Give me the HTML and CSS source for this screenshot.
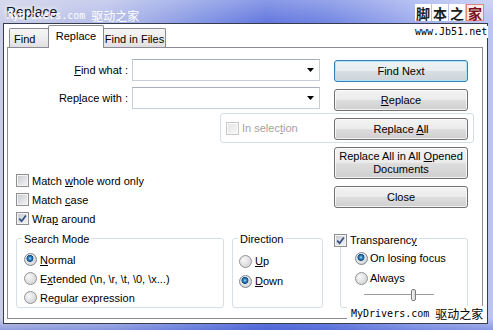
FILE: index.html
```html
<!DOCTYPE html>
<html>
<head>
<meta charset="utf-8">
<link rel="stylesheet" href="styles.css">
</head>
<body>
<div class="window">
  <div class="titlebar"><span class="title">Replace</span></div>
  <div class="client">
    <div class="tabs">
      <div class="tab tab-find">Find</div>
      <div class="tab tab-active">Replace</div>
      <div class="tab tab-files">Find in Files</div>
    </div>
    <div class="panel">
      <div class="top">
        <div class="left">
          <div class="field">
            <label><u>F</u>ind what :</label>
            <div class="combo"><svg width="7" height="4" viewBox="0 0 7 4"><path d="M0 0h7L3.5 4z" fill="#000"/></svg></div>
          </div>
          <div class="field">
            <label>Rep<u>l</u>ace with :</label>
            <div class="combo"><svg width="7" height="4" viewBox="0 0 7 4"><path d="M0 0h7L3.5 4z" fill="#000"/></svg></div>
          </div>
          <div class="selbox">
            <span class="chk chk-dis"></span><span>In selec<u>t</u>ion</span>
          </div>
          <div class="opts">
            <div class="opt"><span class="chk"></span><span>Match <u>w</u>hole word only</span></div>
            <div class="opt"><span class="chk"></span><span>Match <u>c</u>ase</span></div>
            <div class="opt"><span class="chk"><svg width="9" height="9" viewBox="0 0 9 9"><path d="M1.2 4.6L3.6 7.2L7.9 1.4" fill="none" stroke="#2f4f85" stroke-width="1.7"/></svg></span><span>Wra<u>p</u> around</span></div>
          </div>
        </div>
        <div class="buttons">
          <div class="btn btn-focus"><span>Find Next</span></div>
          <div class="btn"><span><u>R</u>eplace</span></div>
          <div class="btn"><span>Replace <u>A</u>ll</span></div>
          <div class="btn btn-tall"><span>Replace All in All <u>O</u>pened<br>Documents</span></div>
          <div class="btn"><span>Close</span></div>
        </div>
      </div>
      <div class="groups">
        <div class="group g-search">
          <div class="gtitle">Search Mode</div>
          <div class="glist">
            <div class="ropt"><span class="radio radio-on"></span><span><u>N</u>ormal</span></div>
            <div class="ropt"><span class="radio"></span><span>E<u>x</u>tended (\n, \r, \t, \0, \x...)</span></div>
            <div class="ropt"><span class="radio"></span><span>Re<u>g</u>ular expression</span></div>
          </div>
        </div>
        <div class="group g-dir">
          <div class="gtitle">Direction</div>
          <div class="glist">
            <div class="ropt"><span class="radio"></span><span><u>U</u>p</span></div>
            <div class="ropt"><span class="radio radio-on"></span><span><u>D</u>own</span></div>
          </div>
        </div>
        <div class="group g-trans">
          <div class="gtitle gtitle-chk"><span class="chk"><svg width="9" height="9" viewBox="0 0 9 9"><path d="M1.2 4.6L3.6 7.2L7.9 1.4" fill="none" stroke="#2f4f85" stroke-width="1.7"/></svg></span><span>Transparenc<u>y</u></span></div>
          <div class="glist">
            <div class="ropt"><span class="radio radio-on"></span><span>On losing focus</span></div>
            <div class="ropt"><span class="radio"></span><span>Always</span></div>
            <div class="slider"><span class="thumb"></span></div>
          </div>
        </div>
      </div>
    </div>
  </div>

  <div class="wm wm-tl"><span class="lat">MyDrivers.com </span><span class="cjk">驱动之家</span></div>
  <div class="wm wm-br"><span class="lat">MyDrivers.com </span><span class="cjk">驱动之家</span></div>
  <div class="wm-tr">
    <span class="ch">脚</span><span class="ch">本</span><span class="ch">之</span><span class="ch ch-red">家</span>
  </div>
  <div class="wm wm-url"><span class="lat">www.Jb51.net</span></div>
</div>
</body>
</html>
```
FILE: styles.css
```css
* { box-sizing: border-box; }
html, body { margin: 0; padding: 0; }
body {
  width: 493px;
  height: 330px;
  overflow: hidden;
  font-family: "Liberation Sans", Arial, sans-serif;
  font-size: 11px;
  color: #000;
  background: #fff;
}
u { text-decoration: underline; text-underline-offset: 1px; }

.window {
  position: relative;
  width: 493px;
  height: 330px;
  display: flex;
  flex-direction: column;
  padding: 0 5px 6px 3px;
  background:
    linear-gradient(180deg, rgba(255,255,255,0.25) 0, rgba(255,255,255,0) 23px, rgba(0,0,0,0) 318px, rgba(40,70,200,0.35) 330px),
    linear-gradient(90deg, #c9cde6 0%, #b6bee9 22%, #8597e4 40%, #6478df 54%, #7185e2 66%, #a0aeee 84%, #bdc5f0 100%);
}
.titlebar {
  height: 23px;
  flex: none;
  display: flex;
  align-items: center;
  padding-left: 3px;
}
.title {
  font-size: 14px;
  color: #141728;
  text-shadow: 0 0 4px #fff, 0 0 8px rgba(255,255,255,0.9);
}

.client {
  flex: 1;
  background: #fff;
  border: 1px solid #363c4c;
  padding: 1px 4px 4px 3px;
  display: flex;
  flex-direction: column;
}

.tabs {
  display: flex;
  align-items: flex-end;
  height: 22px;
  padding-left: 2px;
  flex: none;
}
.tab {
  height: 19px;
  border: 1px solid #898c95;
  border-bottom: none;
  border-radius: 2px 2px 0 0;
  background: linear-gradient(#f6f6f6, #ececec 55%, #e0e0e0);
  padding-top: 3px;
  line-height: 14px;
  text-align: center;
}
.tab-find { width: 40px; text-align: left; padding-left: 4px; }
.tab-active {
  width: 56px;
  height: 23px;
  margin-left: -1px;
  margin-bottom: -1px;
  background: #fff;
  position: relative;
  z-index: 1;
}
.tab-files { width: 63px; margin-left: -1px; }

.panel {
  flex: 1;
  border: 1px solid #898c95;
  background: #fff;
  display: flex;
  flex-direction: column;
}

.top { display: flex; }
.left { width: 326px; flex: none; }
.field {
  display: flex;
  align-items: center;
  height: 22px;
  margin-top: 6px;
}
.field:first-child { margin-top: 11px; }
.field label { width: 120px; text-align: right; }
.combo {
  margin-left: 4px;
  width: 188px;
  height: 22px;
  border: 1px solid #c8ced8;
  border-top-color: #a9afb9;
  background: #fff;
  display: flex;
  align-items: center;
  justify-content: flex-end;
  padding-right: 5px;
}
.combo svg { display: block; }

.selbox {
  margin: 4px 0 0 212px;
  width: 254px;
  height: 30px;
  border: 1px solid #d5dfe5;
  border-radius: 3px;
  display: flex;
  align-items: center;
  gap: 3px;
  padding-left: 5px;
  color: #a2a2a2;
}

.opts { margin-top: 28px; padding-left: 8px; }
.opt { height: 19px; display: flex; align-items: center; gap: 3px; }

.chk {
  width: 13px;
  height: 13px;
  flex: none;
  border: 1px solid #8f8f8f;
  padding: 1px;
  background: linear-gradient(135deg, #c9cdd3, #f2f2f2) content-box, #f4f4f4;
  display: flex;
  align-items: center;
  justify-content: center;
}
.chk svg { display: block; }
.chk-dis {
  border-color: #c8c8c8;
  background: linear-gradient(135deg, #e6e7e9, #f6f6f6) content-box, #fafafa;
}

.buttons {
  margin-top: 12px;
  width: 134px;
  flex: none;
  display: flex;
  flex-direction: column;
  gap: 7px;
}
.btn {
  height: 22px;
  border: 1px solid #707070;
  border-radius: 3px;
  background: linear-gradient(#f3f3f3 0%, #ebebeb 48%, #dddddd 52%, #cfcfcf 100%);
  box-shadow: inset 0 0 0 1px rgba(255,255,255,0.75);
  display: flex;
  align-items: center;
  justify-content: center;
  text-align: center;
  line-height: 13px;
}
.btn-tall { height: 32px; }
.btn-focus {
  border-color: #3c7fb1;
  box-shadow: inset 0 0 0 1px #a9e4f7;
  background: linear-gradient(#eef3f6 0%, #e6ecef 48%, #d8dfe3 52%, #ccd4d9 100%);
}

.groups {
  display: flex;
  padding-left: 8px;
  margin-top: 10px;
}
.group {
  height: 70px;
  border: 1px solid #d5dfe5;
  border-radius: 3px;
}
.g-search { width: 208px; }
.g-dir { width: 91px; margin-left: 8px; }
.g-trans { width: 128px; margin-left: 17px; }

.gtitle {
  width: fit-content;
  height: 14px;
  line-height: 14px;
  margin: -7px 0 0 5px;
  padding: 0 2px;
  background: #fff;
}
.gtitle-chk {
  display: flex;
  align-items: center;
  gap: 3px;
  margin: -6px 0 0 -7px;
  padding: 0 2px 0 0;
}

.glist { display: flex; flex-direction: column; }
.g-search .glist { padding-left: 7px; margin-top: 4px; }
.g-search .ropt { height: 19px; }
.g-dir .glist { padding-left: 6px; margin-top: 5px; }
.g-trans .glist { padding-left: 14px; margin-top: 1px; }
.ropt { height: 20px; display: flex; align-items: center; gap: 3px; }
.g-trans .ropt { gap: 2px; }

.radio {
  width: 13px;
  height: 13px;
  flex: none;
  border-radius: 50%;
  border: 1px solid #8f9396;
  background: radial-gradient(circle at 35% 35%, #f8f8f8 0, #e4e4e4 45%, #c9cbce 100%);
}
.radio-on {
  border-color: #7b8692;
  background:
    radial-gradient(circle at 45% 40%, #9fe0fb 0, #2c83c1 1.6px, #154d80 3.2px, rgba(21,77,128,0) 3.8px),
    radial-gradient(circle at 35% 35%, #f8f8f8 0, #e4e4e4 45%, #c9cbce 100%);
}

.slider {
  margin: 1px 0 0 9px;
  width: 70px;
  height: 12px;
  display: flex;
  align-items: center;
  background:
    linear-gradient(#9d9d9d, #9d9d9d) 0 5px / 100% 1px no-repeat,
    linear-gradient(#ffffff, #ffffff) 0 6px / 100% 1px no-repeat;
}
.thumb {
  margin-left: 47px;
  width: 5px;
  height: 12px;
  border: 1px solid #7d7d7d;
  border-radius: 2px;
  background: linear-gradient(90deg, #f4f4f4, #d6d6d6);
}

/* watermarks overlaid on the screenshot */
.wm {
  position: absolute;
  white-space: nowrap;
  line-height: 12px;
  height: 12px;
  display: flex;
  align-items: flex-end;
}
.lat {
  font-family: "DejaVu Sans Mono", "Liberation Mono", monospace;
  font-size: 10px;
  white-space: pre;
}
.cjk {
  font-family: "Noto Sans CJK SC", sans-serif;
  font-size: 12px;
}
.wm-tl { left: 7px; top: 10px; color: #fff; }
.wm-br {
  left: 347px;
  top: 306px;
  height: 16px;
  padding: 2px 2px 2px 4px;
  background: #fff;
  color: #000;
}
.wm-url {
  left: 414px;
  top: 26px;
  padding: 0 1px;
  background: #fff;
  color: #000;
}
.wm-tr {
  position: absolute;
  left: 415px;
  top: 4px;
  display: flex;
  gap: 1px;
}
.ch {
  width: 16px;
  height: 17px;
  background: #fff;
  color: #1c1c1c;
  font-family: "Noto Sans CJK SC", sans-serif;
  font-size: 14px;
  font-weight: bold;
  display: flex;
  align-items: center;
  justify-content: center;
}
.ch-red {
  width: 18px;
  border: 1px solid #e2857a;
  background: #fde9e5;
  color: #7a1010;
}
```
